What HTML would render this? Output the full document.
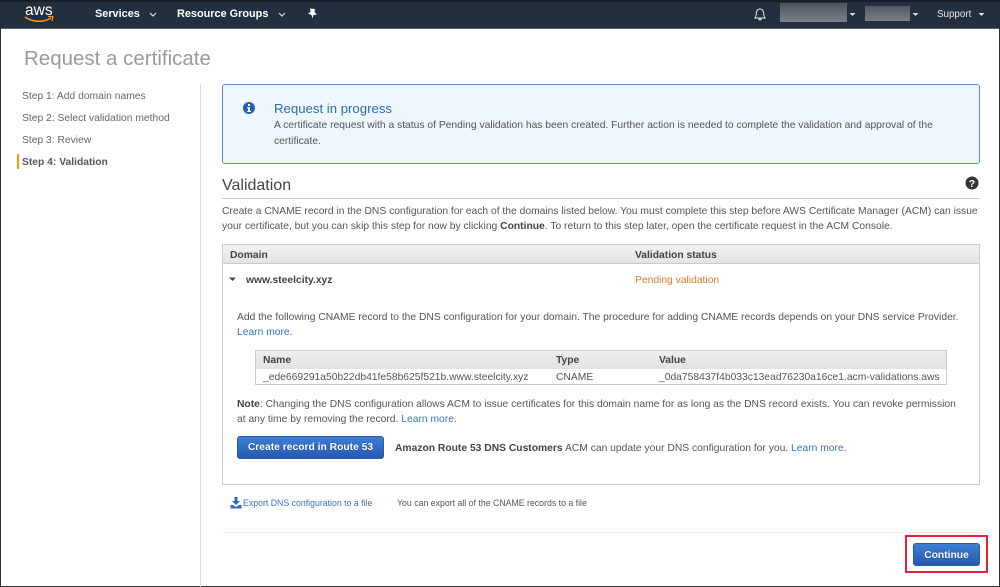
<!DOCTYPE html>
<html><head><meta charset="utf-8"><style>
html,body{margin:0;padding:0;background:#fff}
#p{position:relative;width:1000px;height:587px;overflow:hidden;background:#fff;font-family:"Liberation Sans",sans-serif;color:#555;font-size:10.3px}
.t{position:absolute;white-space:nowrap;line-height:14px}
.b{position:absolute;box-sizing:border-box}
.l{color:#3a72bd}
b{font-weight:700;color:#444}
.btn{position:absolute;box-sizing:border-box;border:1px solid #2a5ba6;border-radius:3px;background:linear-gradient(#3f7fd6,#2559ad);color:#fff;font-weight:700;text-align:center;font-size:10.3px;text-shadow:0 0 1px #123a75}
</style></head><body><div id="p">
<div class="b" style="left:0;top:0;width:1000px;height:29px;background:#232f3e;border-top:2px solid #1a1f27;border-bottom:1px solid #5b6470"></div>
<div class="b" style="left:0;top:28px;width:1px;height:559px;background:#333"></div>
<div class="b" style="left:999px;top:28px;width:1px;height:559px;background:#333"></div>
<div class="b" style="left:0;top:586px;width:1000px;height:1px;background:#333"></div>

<div class="t" style="left:25px;top:3px;color:#fff;font-size:15.5px;line-height:16px">aws</div>
<svg class="b" style="left:24px;top:15px" width="31" height="9" viewBox="0 0 31 9"><path d="M1 2C8 7 19 8 27 3" fill="none" stroke="#f90" stroke-width="1.5"/><path d="M24 1.5L29 1.5L28 6" fill="none" stroke="#f90" stroke-width="1.2"/></svg>
<div class="t" style="left:95px;top:7px;color:#fff;font-weight:700;font-size:10.9px">Services</div>
<svg class="b" style="left:149px;top:12px" width="8" height="6"><path d="M1 1L4 4L7 1" fill="none" stroke="#ddd" stroke-width="1.2"/></svg>
<div class="t" style="left:177px;top:7px;color:#fff;font-weight:700;font-size:10.9px">Resource Groups</div>
<svg class="b" style="left:278px;top:12px" width="8" height="6"><path d="M1 1L4 4L7 1" fill="none" stroke="#ddd" stroke-width="1.2"/></svg>
<svg class="b" style="left:307px;top:8px" width="11" height="11" viewBox="0 0 11 11"><path d="M3 0.5L8 1L7.5 4L10 6.5L6.5 7L5.5 10.5L4.5 7L1 5.5L3.500 4Z" fill="#fff"/></svg>
<svg class="b" style="left:753px;top:7px" width="14" height="15" viewBox="0 0 14 15"><path d="M2 11C3.5 9.5 3 7 3.500 5C4 3 5.500 2 7 2C8.500 2 10 3 10.500 5C11 7 10.500 9.500 12 11Z" fill="none" stroke="#e8e8e8" stroke-width="1"/><path d="M5.500 12.500H8.500" stroke="#e8e8e8" stroke-width="1.500"/></svg>
<div class="b" style="left:780px;top:3px;width:67px;height:19px;background:linear-gradient(#4a5360,#7b8087)"></div>
<svg class="b" style="left:849px;top:12px" width="7" height="5"><path d="M0.500 1H6.500L3.500 4Z" fill="#ddd"/></svg>
<div class="b" style="left:865px;top:6px;width:45px;height:15px;background:linear-gradient(#4f5864,#7b8087)"></div>
<svg class="b" style="left:912px;top:12px" width="7" height="5"><path d="M0.500 1H6.500L3.500 4Z" fill="#ddd"/></svg>
<div class="t" style="left:937px;top:8px;color:#e8e8e8;font-size:9.800px">Support</div>
<svg class="b" style="left:978px;top:12px" width="7" height="5"><path d="M0.500 1H6.500L3.500 4Z" fill="#ddd"/></svg>

<div class="t" style="left:24px;top:46px;font-size:20.500px;line-height:26px;color:#9a9a9a">Request a certificate</div>

<div class="t" style="left:22px;top:90px;color:#666">Step 1: Add domain names</div>
<div class="t" style="left:22px;top:112px;color:#666">Step 2: Select validation method</div>
<div class="t" style="left:22px;top:134px;color:#666">Step 3: Review</div>
<div class="b" style="left:17px;top:154px;width:2px;height:15px;background:#f90"></div>
<div class="t" style="left:22px;top:156px;color:#555;font-weight:700">Step 4: Validation</div>
<div class="b" style="left:200px;top:84px;width:1px;height:503px;background:#ddd"></div>

<div class="b" style="left:222px;top:84px;width:758px;height:80px;background:#eef6fe;border:1px solid #5b8bd0;border-radius:3px"></div>
<svg class="b" style="left:242px;top:101px" width="14" height="14" viewBox="0 0 14 14"><circle cx="7" cy="7" r="6" fill="#2a5fad"/><rect x="6" y="3" width="2" height="2" fill="#fff"/><path d="M5 6.200H8V10H9V11H5V10H6V7.200H5Z" fill="#fff"/></svg>
<div class="t" style="left:274px;top:101px;font-size:13.200px;line-height:16px;color:#2f6bb8">Request in progress</div>
<div class="t" style="left:274px;top:119px">A certificate request with a status of Pending validation has been created. Further action is needed to complete the validation and approval of the</div>
<div class="t" style="left:274px;top:135px">certificate.</div>

<div class="t" style="left:222px;top:176px;font-size:16px;line-height:19px;color:#444">Validation</div>
<svg class="b" style="left:965px;top:176px" width="14" height="14" viewBox="0 0 14 14"><circle cx="7" cy="7" r="6.500" fill="#333"/><text x="7" y="11" text-anchor="middle" font-family="Liberation Sans" font-weight="700" font-size="10.500" fill="#fff">?</text></svg>
<div class="b" style="left:222px;top:198px;width:758px;height:1px;background:#ccc"></div>
<div class="t" style="left:222px;top:205px">Create a CNAME record in the DNS configuration for each of the domains listed below. You must complete this step before AWS Certificate Manager (ACM) can issue</div>
<div class="t" style="left:222px;top:220px">your certificate, but you can skip this step for now by clicking <b>Continue</b>. To return to this step later, open the certificate request in the ACM Console.</div>

<div class="b" style="left:222px;top:244px;width:758px;height:241px;border:1px solid #ccc;background:#fff"></div>
<div class="b" style="left:223px;top:245px;width:756px;height:19px;background:linear-gradient(#f2f2f2,#e4e4e4);border-bottom:1px solid #ccc"></div>
<div class="t" style="left:230px;top:249px;font-weight:700;color:#444">Domain</div>
<div class="t" style="left:635px;top:249px;font-weight:700;color:#444">Validation status</div>
<svg class="b" style="left:229px;top:277px" width="8" height="5"><path d="M0 0.500H7L3.500 4Z" fill="#444"/></svg>
<div class="t" style="left:246px;top:274px;font-weight:700;color:#444">www.steelcity.xyz</div>
<div class="t" style="left:635px;top:274px;color:#e8782a">Pending validation</div>
<div class="t" style="left:237px;top:311px">Add the following CNAME record to the DNS configuration for your domain. The procedure for adding CNAME records depends on your DNS service Provider.</div>
<div class="t l" style="left:237px;top:326px">Learn more.</div>

<div class="b" style="left:255px;top:350px;width:692px;height:35px;border:1px solid #ccc;background:#fff"></div>
<div class="b" style="left:256px;top:351px;width:690px;height:18px;background:linear-gradient(#eee,#e2e2e2)"></div>
<div class="t" style="left:263px;top:354px;font-weight:700;color:#444">Name</div>
<div class="t" style="left:556px;top:354px;font-weight:700;color:#444">Type</div>
<div class="t" style="left:659px;top:354px;font-weight:700;color:#444">Value</div>
<div class="t" style="left:263px;top:371px">_ede669291a50b22db41fe58b625f521b.www.steelcity.xyz</div>
<div class="t" style="left:556px;top:371px">CNAME</div>
<div class="t" style="left:659px;top:371px">_0da758437f4b033c13ead76230a16ce1.acm-validations.aws</div>

<div class="t" style="left:237px;top:398px"><b>Note</b>: Changing the DNS configuration allows ACM to issue certificates for this domain name for as long as the DNS record exists. You can revoke permission</div>
<div class="t" style="left:237px;top:413px">at any time by removing the record. <span class="l">Learn more.</span></div>
<div class="btn" style="left:237px;top:436px;width:147px;height:23px;line-height:22px">Create record in Route 53</div>
<div class="t" style="left:395px;top:442px"><b>Amazon Route 53 DNS Customers</b> ACM can update your DNS configuration for you. <span class="l">Learn more.</span></div>

<svg class="b" style="left:230px;top:497px" width="12" height="12" viewBox="0 0 12 12"><path d="M4.500 0H7.500V4H10L6 8L2 4H4.500Z" fill="#2f6bb8"/><path d="M0.500 8H3L6 10L9 8H11.500V11.500H0.500Z" fill="#2f6bb8"/></svg>
<div class="t l" style="left:243px;top:496px;font-size:8.750px">Export DNS configuration to a file</div>
<div class="t" style="left:397px;top:496px;font-size:8.750px">You can export all of the CNAME records to a file</div>

<div class="b" style="left:222px;top:532px;width:758px;height:1px;background:#eee"></div>
<div class="b" style="left:905px;top:535px;width:83px;height:38px;border:2px solid #e8203a"></div>
<div class="btn" style="left:913px;top:543px;width:67px;height:23px;line-height:23px">Continue</div>
</div></body></html>
